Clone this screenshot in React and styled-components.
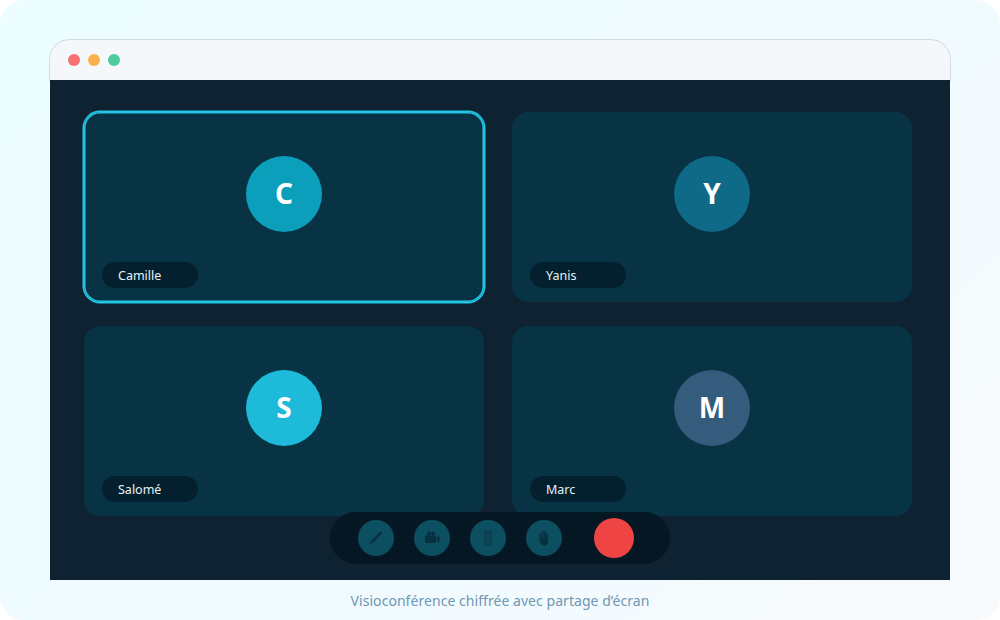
import React from "react"
import styled, { createGlobalStyle } from "styled-components"

const participants = [
  { name: "Camille", initial: "C", tint: "#0b9fbb", active: true },
  { name: "Yanis", initial: "Y", tint: "#0e6a86" },
  { name: "Salomé", initial: "S", tint: "#1dbbd9" },
  { name: "Marc", initial: "M", tint: "#355c7d" },
]

const Pencil = () => (
  <svg width="20" height="20" viewBox="0 0 20 20" fill="#082f40">
    <path d="M14.4 3.4 16.2 5.2 7.2 14.4 5.2 12.4Z" />
    <path d="M4.8 13 6.6 14.9 3.4 16.4Z" />
  </svg>
)

const Camera = () => (
  <svg width="20" height="20" viewBox="0 0 20 20" fill="#082f40">
    <circle cx="6.8" cy="5.4" r="2" />
    <circle cx="11.2" cy="5.4" r="2" />
    <rect x="3" y="7.4" width="11" height="7.6" rx="1" />
    <path d="M14.4 10 17.4 8V14.4L14.4 12.4Z" />
  </svg>
)

const Tablet = () => (
  <svg width="20" height="20" viewBox="0 0 20 20" fill="#0c4656" stroke="#0a3b4c" strokeWidth="1">
    <rect x="6.5" y="3" width="7" height="14" rx="0.5" />
    <path d="M8.5 6.5h3M8.5 13.5h3" />
  </svg>
)

const Hand = () => (
  <svg width="20" height="20" viewBox="0 0 20 20" fill="#082f40">
    <rect x="5.6" y="5.6" width="1.6" height="7" rx="0.8" />
    <rect x="7.9" y="2.6" width="1.6" height="8" rx="0.8" />
    <rect x="10.2" y="3" width="1.6" height="8" rx="0.8" />
    <rect x="12.5" y="5" width="1.6" height="7" rx="0.8" />
    <path d="M5.6 10.6H14.1V13.4C14.1 16 12.4 17.6 10 17.6 8 17.6 6.8 16.4 6.2 14.6Z" />
  </svg>
)

const App = () => {
  return (
    <Page>
      <GlobalStyle />
      <Browser>
        <TitleBar>
          <Dot color="#f87171" />
          <Dot color="#fbb04f" />
          <Dot color="#4fcba0" />
        </TitleBar>
        <Stage>
          <Grid>
            {participants.map(p => (
              <Tile key={p.name} $active={p.active}>
                <Avatar $tint={p.tint}>{p.initial}</Avatar>
                <NameTag>{p.name}</NameTag>
              </Tile>
            ))}
          </Grid>
          <Controls>
            <RoundButton><Pencil /></RoundButton>
            <RoundButton><Camera /></RoundButton>
            <RoundButton><Tablet /></RoundButton>
            <RoundButton><Hand /></RoundButton>
            <RecordButton />
          </Controls>
        </Stage>
      </Browser>
      <Caption>Visioconférence chiffrée avec partage d’écran</Caption>
    </Page>
  )
}

export default App

const GlobalStyle = createGlobalStyle`
  html, body {
    margin: 0;
    padding: 0;
    background: #ffffff;
  }
`
const Page = styled.div`
  width: 1000px;
  height: 620px;
  box-sizing: border-box;
  padding: 40px 50px 0;
  border-radius: 24px;
  background: linear-gradient(135deg, #ecfeff 0%, #f0fbff 55%, #f8fafc 100%);
  font-family: "Noto Sans", "Open Sans", sans-serif;
  overflow: hidden;
`
const Browser = styled.div`
  height: 540px;
  display: flex;
  flex-direction: column;
`
const TitleBar = styled.div`
  height: 40px;
  flex: none;
  display: flex;
  align-items: center;
  gap: 8px;
  padding: 0 18px;
  background: #f4f8fa;
  box-shadow: 0 0 0 1px #cfdbe3;
  border-radius: 20px 20px 0 0;
`
const Dot = styled.span`
  width: 12px;
  height: 12px;
  border-radius: 50%;
  background: ${({ color }) => color};
`
const Stage = styled.div`
  position: relative;
  flex: 1;
  box-sizing: border-box;
  padding: 32px 38px 0 34px;
  background: #0f2231;
`
const Grid = styled.div`
  display: grid;
  grid-template-columns: 400px 400px;
  grid-auto-rows: 190px;
  column-gap: 28px;
  row-gap: 24px;
`
const Tile = styled.div`
  position: relative;
  display: flex;
  justify-content: center;
  padding-top: 44px;
  box-sizing: border-box;
  background: #083344;
  border-radius: 16px;
  box-shadow: ${({ $active }) =>
    $active ? "0 0 0 1.5px #22c6e6, inset 0 0 0 1.5px #22c6e6" : "none"};
`
const Avatar = styled.div`
  width: 76px;
  height: 76px;
  border-radius: 50%;
  display: flex;
  align-items: center;
  justify-content: center;
  padding-bottom: 2px;
  box-sizing: border-box;
  background: ${({ $tint }) => $tint};
  color: #ffffff;
  font-size: 28px;
  font-weight: 700;
`
const NameTag = styled.div`
  position: absolute;
  left: 18px;
  bottom: 14px;
  width: 96px;
  height: 26px;
  box-sizing: border-box;
  padding-left: 16px;
  border-radius: 13px;
  background: #04202f;
  color: #e6f4f8;
  font-size: 12.5px;
  line-height: 27px;
`
const Controls = styled.div`
  position: absolute;
  left: 280px;
  top: 432px;
  width: 340px;
  height: 52px;
  box-sizing: border-box;
  padding: 0 28px;
  display: flex;
  align-items: center;
  gap: 20px;
  border-radius: 26px;
  background: #041722;
`
const RoundButton = styled.div`
  width: 36px;
  height: 36px;
  border-radius: 50%;
  display: flex;
  align-items: center;
  justify-content: center;
  background: #0c4f60;
`
const RecordButton = styled.div`
  width: 40px;
  height: 40px;
  margin-left: 12px;
  border-radius: 50%;
  background: #ef4444;
`
const Caption = styled.div`
  height: 40px;
  line-height: 42px;
  text-align: center;
  color: #6f97b3;
  font-size: 14px;
  letter-spacing: 0.05px;
`
